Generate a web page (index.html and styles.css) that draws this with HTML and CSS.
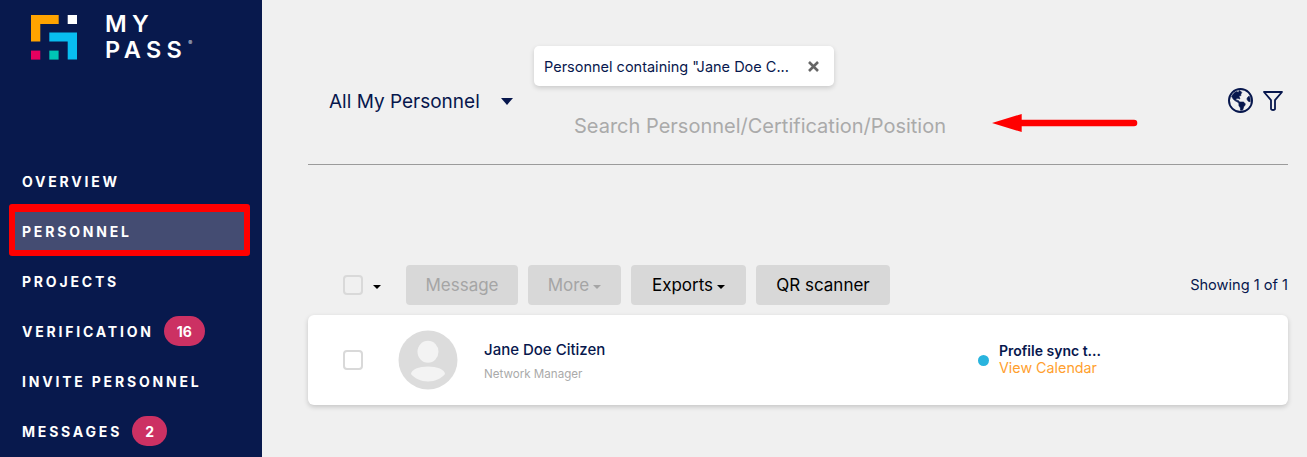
FILE: index.html
```html
<!DOCTYPE html>
<html lang="en">
<head>
<meta charset="utf-8">
<title>My Pass - Personnel</title>
<link rel="stylesheet" href="styles.css">
</head>
<body>
<div class="app">
  <aside class="sidebar">
    <div class="brand">
      <svg class="brand-mark" width="46" height="45" viewBox="0 0 46 45">
        <path fill="#ffa300" d="M0 0h27.7v9H9.3v17.6H0z"/>
        <rect fill="#fff" x="36.7" y="0" width="9.3" height="9"/>
        <path fill="#08bdf0" d="M18.3 17.6H46V44.6h-9.3V26.6H18.3z"/>
        <rect fill="#e5005f" x="0" y="35.6" width="9.3" height="9"/>
        <rect fill="#00c5b5" x="18.3" y="35.6" width="9.3" height="9"/>
      </svg>
      <div class="brand-name">MY<br>PASS<sup class="reg">®</sup></div>
    </div>
    <nav class="nav">
      <a class="nav-link">OVERVIEW</a>
      <a class="nav-link active">PERSONNEL<span class="red-box"></span></a>
      <a class="nav-link">PROJECTS</a>
      <a class="nav-link">VERIFICATION<span class="badge badge-wide">16</span></a>
      <a class="nav-link">INVITE PERSONNEL</a>
      <a class="nav-link">MESSAGES<span class="badge">2</span></a>
    </nav>
  </aside>
  <main class="main">
    <header class="head">
      <div class="scope"><span>All My Personnel</span><i class="caret caret-lg"></i></div>
      <div class="search">
        <div class="chip">
          <span class="chip-text">Personnel containing "Jane Doe C...</span>
          <svg class="chip-x" width="11" height="11" viewBox="0 0 11 11"><path d="M1 1l9 9M10 1l-9 9" stroke="#666" stroke-width="2.6" fill="none"/></svg>
        </div>
        <div class="search-input">Search Personnel/Certification/Position</div>
      </div>
      <div class="head-icons">
        <svg width="25" height="25" viewBox="0 0 512 512"><circle cx="256" cy="256" r="236" fill="none" stroke="#07174d" stroke-width="40"/><path fill="#07174d" stroke="#07174d" stroke-width="14" transform="translate(8 0)" d="M330.29 365.6c-3.9 3.88-7.99 7.95-11.31 11.28-2.99 3-5.1 6.7-6.17 10.71-1.51 5.66-2.73 11.38-4.77 16.87l-17.39 46.85c-13.76 3-28 4.69-42.65 4.69v-27.38c1.69-12.62-7.64-36.26-22.63-51.25-6-6-9.37-14.14-9.37-22.63v-32.01c0-11.64-6.27-22.34-16.46-27.97-14.37-7.95-34.81-19.06-48.81-26.11-11.48-5.78-22.1-13.14-31.65-21.75l-.8-.72a114.792 114.792 0 0 1-18.06-20.74c-9.38-13.77-24.66-36.42-34.59-51.14 20.47-45.5 57.36-82.04 103.2-101.89l24.01 12.01C203.48 89.74 216 82.01 216 70.11v-11.3c7.99-1.29 16.12-2.11 24.42-2.54l28.3 28.3c6.25 6.25 6.25 16.38 0 22.63L264 112l-10.34 10.34c-3.12 3.12-3.12 8.19 0 11.31l4.69 4.69c3.12 3.12 3.12 8.19 0 11.31l-8 8a8.008 8.008 0 0 1-5.66 2.34h-8.99c-2.08 0-4.08.81-5.58 2.27l-9.92 9.65a8.008 8.008 0 0 0-1.58 9.31l15.59 31.19c2.66 5.32-1.21 11.58-7.15 11.58h-5.64c-1.93 0-3.79-.7-5.24-1.96l-9.28-8.06a16.017 16.017 0 0 0-15.55-3.1l-31.17 10.39a11.95 11.95 0 0 0-8.17 11.34c0 4.53 2.56 8.66 6.61 10.69l11.08 5.54c9.41 4.71 19.79 7.16 30.31 7.16s22.59 27.29 32 32h66.75c8.49 0 16.62 3.37 22.63 9.37l13.69 13.69a30.503 30.503 0 0 1 8.93 21.57 46.536 46.536 0 0 1-13.72 32.98zM417 274.25c-5.79-1.45-10.84-5-14.15-9.97l-17.98-26.97a23.97 23.97 0 0 1 0-26.62l19.59-29.38c2.32-3.47 5.5-6.29 9.24-8.15l12.98-6.49C440.2 193.59 448 223.87 448 256c0 8.67-.74 17.16-1.82 25.54L417 274.25z"/></svg>
        <svg width="20" height="20" viewBox="0 0 20 20"><path d="M1 1h18l-7 8.2v8.6c0 1.6-4 1.6-4 0V9.2z" fill="none" stroke="#07174d" stroke-width="1.8" stroke-linejoin="round"/></svg>
      </div>
      <svg class="arrow" width="146" height="18" viewBox="0 0 146 18"><path fill="#f00" d="M0 9L29.700 0V5.700H142a3.300 3.300 0 0 1 0 6.600H29.700V18z"/></svg>
    </header>
    <section class="toolbar">
      <span class="check"></span>
      <i class="caret caret-sm caret-black"></i>
      <button class="btn disabled btn-message">Message</button>
      <button class="btn disabled btn-more">More<i class="caret caret-sm caret-grey"></i></button>
      <button class="btn btn-exports">Exports<i class="caret caret-sm caret-black"></i></button>
      <button class="btn btn-qr">QR scanner</button>
      <span class="showing">Showing 1 of 1</span>
    </section>
    <article class="card">
      <span class="check"></span>
      <svg class="avatar" width="60" height="60" viewBox="0 0 60 60">
        <circle cx="30" cy="30" r="29.500" fill="#dcdcdc"/>
        <ellipse cx="30" cy="21.800" rx="10.500" ry="11" fill="#f3f3f3"/>
        <path fill="#f3f3f3" d="M13 44c0-4.500 8-7.500 17-7.500s17 3 17 7.500c-3 4-10 7.500-17 7.500s-14-3.500-17-7.500z"/>
      </svg>
      <div class="person">
        <div class="person-name">Jane Doe Citizen</div>
        <div class="person-role">Network Manager</div>
      </div>
      <span class="dot"></span>
      <div class="sync">
        <div class="sync-title">Profile sync t...</div>
        <a class="sync-link">View Calendar</a>
      </div>
    </article>
  </main>
</div>
</body>
</html>
```
FILE: styles.css
```css
* { box-sizing: border-box; }
html, body { margin: 0; height: 100%; overflow: hidden; }
body { font-family: Inter, "Noto Sans", sans-serif; color: #07174d; background: #f0f0f0; }
.app { display: flex; height: 457px; overflow: hidden; }

.sidebar { width: 262px; flex: none; background: #08194d; color: #fff; }
.brand { height: 156px; padding: 15px 0 0 31px; display: flex; align-items: flex-start; }
.brand-name { margin-left: 28px; font-size: 23.500px; font-weight: 600; line-height: 26px; letter-spacing: 5.400px; margin-top: -4px; }
.reg { font-size: 6px; letter-spacing: 0; vertical-align: 13px; line-height: 0; margin-left: 1px; opacity: .8; }

.nav { display: flex; flex-direction: column; }
.nav-link { position: relative; display: flex; align-items: center; height: 38px; margin: 6px 18px 6px 15px; padding-left: 7px; font-size: 14px; font-weight: 700; letter-spacing: 2.800px; white-space: nowrap; }
.active { background: #444c72; }
.red-box { position: absolute; top: -8px; right: -6px; bottom: -6px; left: -6px; border: 6px solid #f00; border-top-width: 8px; border-radius: 3px; }
.badge { display: flex; align-items: center; justify-content: center; width: 35px; height: 30px; margin-left: 10px; border-radius: 15px; background: #cc3163; color: #fff; font-size: 14px; font-weight: 700; letter-spacing: 0; }
.badge-wide { width: 41px; }

.main { flex: 1; padding: 0 19px 0 46px; min-width: 0; }
.head { position: relative; display: flex; height: 165px; padding-top: 46px; border-bottom: 1px solid #9b9b9b; }
.scope { width: 226px; flex: none; padding: 45px 0 0 21px; display: flex; align-items: flex-start; font-size: 19px; line-height: 22px; }
.caret { display: inline-block; width: 0; height: 0; border-style: solid; border-color: currentColor transparent transparent; }
.caret-lg { border-width: 7px 6px 0; margin: 7px 0 0 21px; color: #07174d; }
.caret-sm { border-width: 4px 4px 0; margin-left: 4px; vertical-align: 2px; }
.caret-black { color: #000; }
.caret-grey { color: #a5a5a5; }

.search { width: 460px; flex: none; }
.chip { width: 300px; height: 40px; padding: 0 15px 0 10px; display: flex; align-items: center; justify-content: space-between; background: #fff; border-radius: 5px; box-shadow: 0 2px 5px rgba(0,0,0,.16); font-size: 14.500px; white-space: nowrap; }
.search-input { margin: 28px 0 0 40px; font-size: 20px; line-height: 24px; color: #aaa; white-space: nowrap; }
.head-icons { margin-left: auto; margin-top: 42px; margin-right: 5px; display: flex; align-items: flex-start; gap: 10px; height: 25px; }
.head-icons svg:last-child { margin-top: 3px; }
.arrow { position: absolute; left: 684px; top: 114px; }

.toolbar { display: flex; align-items: center; height: 40px; margin-top: 100px; padding-left: 35px; }
.check { width: 20px; height: 20px; flex: none; background: #fff; border: 2px solid #d9d9d9; border-radius: 4px; }
.toolbar .check { background: transparent; }
.toolbar > .caret { margin: 3px 0 0 10px; }
.btn { height: 40px; padding: 0; border: 0; border-radius: 4px; background: #d8d8d8; color: #000; font: 400 17px Inter, sans-serif; white-space: nowrap; }
.btn.disabled { color: #a5a5a5; }
.btn-message { width: 112px; margin-left: 25px; }
.btn-more { width: 93px; margin-left: 10px; }
.btn-exports { width: 115px; margin-left: 10px; }
.btn-qr { width: 134px; margin-left: 10px; }
.showing { margin-left: auto; font-size: 14.600px; margin-top: -1px; }

.card { display: flex; align-items: center; height: 90px; margin-top: 10px; padding-left: 35px; background: #fff; border-radius: 6px; box-shadow: 0 2px 5px rgba(0,0,0,.18); }
.avatar { margin-left: 35px; flex: none; }
.person { width: 494px; margin-left: 26px; margin-top: 1px; flex: none; }
.person-name { font-size: 15px; font-weight: 500; line-height: 20px; }
.person-role { margin-top: 7px; font-size: 11.600px; line-height: 14px; color: #aaa; }
.dot { width: 11px; height: 11px; flex: none; border-radius: 50%; background: #29b4de; }
.sync { margin-left: 10px; font-size: 14px; line-height: 17px; margin-top: -2px; }
.sync-title { font-weight: 600; }
.sync-link { color: #ffa02e; font-size: 14.300px; }
```
